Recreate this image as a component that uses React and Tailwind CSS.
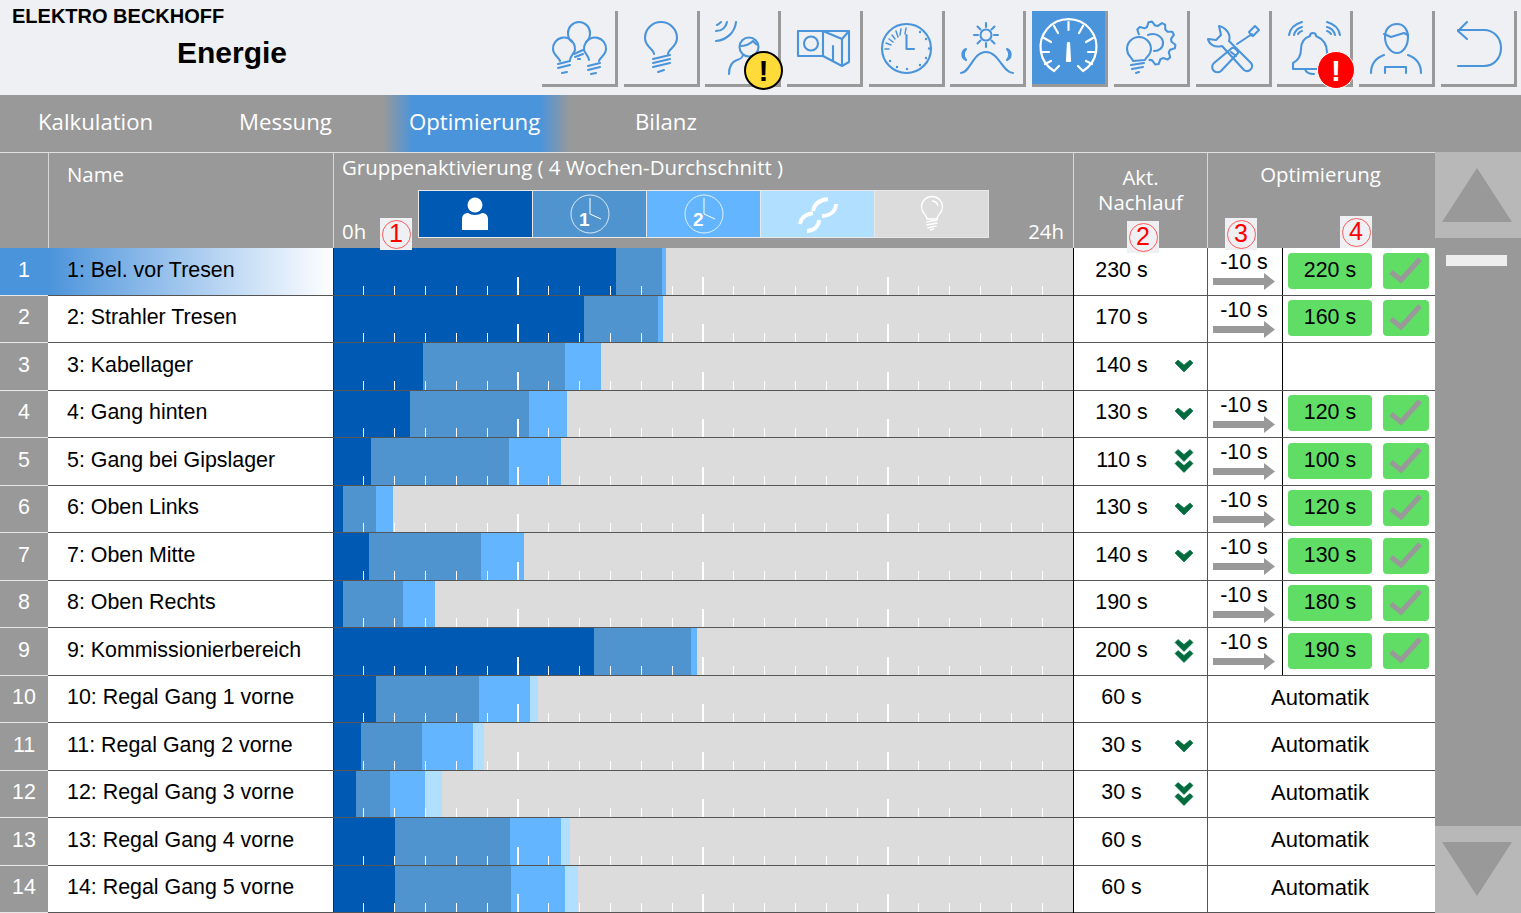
import React from 'react';

const rows = [
  { name: '1: Bel. vor Tresen', bars: [283, 46, 4, 0], time: '230 s', arrow: 0, opt: '220 s' },
  { name: '2: Strahler Tresen', bars: [251, 74, 5, 0], time: '170 s', arrow: 0, opt: '160 s' },
  { name: '3: Kabellager', bars: [90, 142, 36, 0], time: '140 s', arrow: 1, blank: true },
  { name: '4: Gang hinten', bars: [77, 119, 38, 0], time: '130 s', arrow: 1, opt: '120 s' },
  { name: '5: Gang bei Gipslager', bars: [38, 138, 52, 0], time: '110 s', arrow: 2, opt: '100 s' },
  { name: '6: Oben Links', bars: [10, 33, 17, 0], time: '130 s', arrow: 1, opt: '120 s' },
  { name: '7: Oben Mitte', bars: [36, 112, 43, 0], time: '140 s', arrow: 1, opt: '130 s' },
  { name: '8: Oben Rechts', bars: [10, 60, 32, 0], time: '190 s', arrow: 0, opt: '180 s' },
  { name: '9: Kommissionierbereich', bars: [261, 97, 6, 0], time: '200 s', arrow: 2, opt: '190 s' },
  { name: '10: Regal Gang 1 vorne', bars: [43, 103, 51, 8], time: '60 s', arrow: 0 },
  { name: '11: Regal Gang 2 vorne', bars: [28, 61, 51, 11], time: '30 s', arrow: 1 },
  { name: '12: Regal Gang 3 vorne', bars: [23, 34, 35, 17], time: '30 s', arrow: 2 },
  { name: '13: Regal Gang 4 vorne', bars: [62, 115, 51, 9], time: '60 s', arrow: 0 },
  { name: '14: Regal Gang 5 vorne', bars: [62, 116, 54, 13], time: '60 s', arrow: 0 },
];

const barColors = ['#0059b3', '#4f94cf', '#63b5ff', '#b0dfff'];
const ticks = Array.from({ length: 23 }, (_, i) => i + 1);

// Zahnrad-Kontur als offener Linienzug, von -150 bis 105 Grad
function gearPath(cx, cy, inner, outer) {
  const pts = [];
  const steps = 28;
  for (let i = 0; i <= steps; i++) {
    const a = ((-150 + (255 * i) / steps) * Math.PI) / 180;
    const r = i % 4 === 1 || i % 4 === 2 ? outer : inner;
    pts.push(`${(cx + r * Math.cos(a)).toFixed(1)} ${(cy + r * Math.sin(a)).toFixed(1)}`);
  }
  return 'M' + pts.join('L');
}

function Stroke({ color = '#4a94db', width = 2.1, children }) {
  return (
    <svg viewBox="0 0 76 76" className="w-[76px] h-[76px]" fill="none" stroke={color} strokeWidth={width} strokeLinecap="round" strokeLinejoin="round">
      {children}
    </svg>
  );
}

const icons = [
  // drei Lampen
  <Stroke key="a">
    <path d="M30 31c-3-2-4-5-4-9a11 11 0 0 1 22 0c0 4-1 7-4 9" />
    <path d="M18 50c-1-4-7-6-7-12a11 11 0 0 1 21-5c1 2 1 4 1 6-1 4-5 6-5 10" />
    <path d="M57 50c1-4 7-6 7-12a11 11 0 0 0-21-5c-1 2-1 4-1 6 1 4 5 6 5 10" />
    <path d="M32 43l9-4M33 46l8-3M36 48h2" />
    <path d="M16 53l12-3M16 57l12-3M20 62l5-1M46 55l12-3M46 59l12-3M49 63l5-1" />
  </Stroke>,
  // Lampe
  <Stroke key="b">
    <path d="M30 43c0-5-9-7-9-16a16 16 0 0 1 32 0c0 9-9 11-9 16" />
    <path d="M29 48l17-4M29 52l17-4M29 56l17-4M34 61l6-2" />
  </Stroke>,
  // Bewegungsmelder
  <Stroke key="c">
    <path d="M31 11c-1 10-9 18-20 19M22 11c-1 5-5 9-11 9M16 11c-1 1-2 2-4 3" />
    <circle cx="44" cy="36" r="9.500" />
    <path d="M35 35c5 0 10-2 13-5 2 2 3 4 5 4M38 44c-1 3-2 4-6 5-6 2-8 7-8 14" />
  </Stroke>,
  // Schalter
  <Stroke key="d">
    <path d="M11 20h25v25H11z" />
    <circle cx="24" cy="32.500" r="7" />
    <path d="M36 20h26v31l-7 4-19-10M36 20l19 8v27M62 20l-7 8M46 35v14" />
  </Stroke>,
  // Zeitschaltuhr
  <Stroke key="e">
    <circle cx="37.500" cy="37.500" r="24.500" />
    <path d="M37.500 24v14h7.500" />
    <path d="M37 17l-1 6M32 18l-1 6M27 20l2 6M23 24l3 4M20 28l4 3M17 32l5 2M16 38l4 0" strokeWidth="1.500" />
    <path d="M51 21v.1M57 28v.1M60 37.500v.1M57 47v.1M51 54v.1M38 58v.1M28 56v.1M21 50v.1" strokeWidth="2.400" />
  </Stroke>,
  // Tag und Nacht
  <Stroke key="f">
    <circle cx="36" cy="24" r="5.500" />
    <path d="M36 12v4M36 32v4M24 24h4M44 24h4M27.500 15.500l3 3M41.500 29.500l3 3M27.500 32.500l3-3M41.500 18.500l3-3" />
    <path d="M11 62c9 0 12-21 25-21s17 21 27 21" />
    <path d="M16 38a6 6 0 0 0 0 11 8 8 0 0 1 0-11zM57 38a6 6 0 0 1 0 11 8 8 0 0 0 0-11z" />
  </Stroke>,
  // Tacho, aktiv
  <Stroke key="g" color="#fff" width="2.200">
    <path d="M22 60a28 28 0 1 1 29 0l-5-5M22 60l5-5" />
    <path d="M36.500 11v8M22 15l4 7M51 15l-4 7M12 27l7 4M61 27l-7 4M9 41h8M64 41h-8M13 53l6-3M60 53l-6-3" />
    <path d="M35 50l1-18h1l1 18z" fill="#fff" />
  </Stroke>,
  // Einstellungen
  <Stroke key="h">
    <path d={gearPath(40, 32, 17.5, 21.5)} />
    <path d="M34 24c8-3 15 2 15 8 0 5-4 8-9 8" />
    <path d="M19 50c-1-4-6-5-6-12a12 12 0 0 1 24 0c0 6-5 8-6 11z" />
    <path d="M17 54l13-2M18 58l11-2M22 62l3-1" />
  </Stroke>,
  // Werkzeug
  <Stroke key="i">
    <path d="M26 35C18 37 13 33 12 28l8 1 5-5-2-9c8 2 12 9 10 15l22 22a5 5 0 0 1-7 7z" />
    <path d="M36 37L18 52a5 5 0 0 0 7 8L42 42c1-2-4-6-6-5zM41 33l15-10M55 24l-2-3 6-6 4 4-6 6z" />
    <path d="M35 41l5 4" />
  </Stroke>,
  // Alarm
  <Stroke key="j">
    <path d="M33 25a3 3 0 0 1 6 0c7 3 11 9 11 16 0 7 3 11 9 14v3H16v-6c6-3 8-7 8-14 0-6 3-11 9-13z" />
    <path d="M28 58c1 4 5 5 9 5" />
    <path d="M12 24c1-6 6-11 13-13M17 24c1-4 4-7 8-8M21 23c1-1 2-3 4-3M63 24c-1-6-6-11-13-13M58 24c-1-4-4-7-8-8M54 23c-1-1-2-3-4-3" />
  </Stroke>,
  // Benutzer
  <Stroke key="k">
    <path d="M26 26c0-8 5-13 12-13s11 6 11 13c0 9-5 16-11 16s-12-7-12-16z" />
    <path d="M25 23l7 3 13-4 4 2" />
    <path d="M12 62c0-10 5-15 13-18M62 62c0-10-5-15-13-18" />
    <path d="M26 62v-6h21v6" />
  </Stroke>,
  // Zurueck
  <Stroke key="l">
    <path d="M26 11l-9 9 9 8" />
    <path d="M17 19h26c10 0 17 8 17 18s-7 18-17 18H17" />
  </Stroke>,
];

function TopButton({ active, children }) {
  return (
    <div className={`w-[76px] h-[76px] shrink-0 border-r-[3px] border-b-[3px] border-[#999999] box-border overflow-visible ${active ? 'bg-[#4a94db]' : ''}`}>
      {children}
    </div>
  );
}

function Callout({ n, className }) {
  return (
    <div className={`absolute w-8 h-8 bg-[#eff0f3] flex items-center justify-center ${className}`}>
      <div className="w-[29px] h-[29px] rounded-full border border-[#ff5a5a] flex items-center justify-center text-[#ff0000] text-[25px] font-['Liberation_Sans',sans-serif]">
        {n}
      </div>
    </div>
  );
}

function Chevrons({ count }) {
  if (!count) return null;
  return (
    <svg viewBox="0 0 20 24" className="absolute left-[100px] top-1/2 -translate-y-1/2 w-5 h-6" fill="#006b3c" stroke="#006b3c" strokeWidth="0.600">
      {count === 1 && <path d="M1 9l3-3 6 5 6-5 3 3-9 9z" />}
      {count === 2 && <path d="M1 3.500l3-3 6 5 6-5 3 3-9 9zM1 14.500l3-3 6 5 6-5 3 3-9 9z" />}
    </svg>
  );
}

function ArrowGray() {
  return (
    <svg viewBox="0 0 62 17" className="w-[62px] h-[17px] shrink-0" fill="#999999">
      <path d="M0 5h51V0l11 8.500L51 17v-5H0z" />
    </svg>
  );
}

function ClockLegend({ digit }) {
  return (
    <svg viewBox="0 0 40 40" className="w-10 h-10" fill="none" stroke="#fff">
      <circle cx="20" cy="20" r="19" strokeWidth="0.800" />
      <path d="M20 4v16l11 5" strokeWidth="1" />
      <text x="9" y="32" fill="#fff" stroke="none" fontSize="19" fontWeight="700" fontFamily="Liberation Sans, sans-serif">{digit}</text>
    </svg>
  );
}

function Row({ row, index }) {
  const selected = index === 0;
  return (
    <div className="grid grid-cols-[48px_285px_741px_134px_227px] h-[47.5px] box-border">
      <div className={`flex items-center justify-center pb-[3px] text-white text-[21.4px] border-b border-[#e8e8e8] ${selected ? 'bg-[#4a94db]' : 'bg-[#999999]'}`}>
        {index + 1}
      </div>
      <div className={`flex items-center pl-[19px] pb-[3px] text-[21.4px] text-black border-b border-[#555555] whitespace-nowrap ${selected ? 'bg-linear-to-r from-[#4a94db] to-white' : 'bg-white'}`}>
        {row.name}
      </div>
      <div className="relative flex bg-[#dcdcdc] border-r border-black overflow-hidden">
        {row.bars.map((w, i) => (
          <div key={i} className="h-full shrink-0" style={{ width: w, backgroundColor: barColors[i] }} />
        ))}
        {ticks.map(t => (
          <div
            key={t}
            className={`absolute bottom-0 bg-white ${t % 6 === 0 ? 'w-[2px] h-[19px]' : 'w-px h-[10px]'}`}
            style={{ left: t * 30.83 - 0.5 }}
          />
        ))}
        <div className="absolute left-0 top-0 bottom-0 w-px bg-[#00336b]" />
        <div className="absolute left-0 right-0 bottom-0 h-px bg-[#555555]" />
      </div>
      <div className="relative bg-white border-r border-[#555555] border-b flex items-center pb-[3px]">
        <div className="w-[95px] text-center text-[21.4px] text-black">{row.time}</div>
        <Chevrons count={row.arrow} />
      </div>
      {row.opt || row.blank ? (
        <div className="flex bg-white border-b border-[#555555]">
          <div className="w-[75px] shrink-0 border-r border-black flex flex-col items-center pt-[3px] pr-[2px]">
            {row.opt && (
              <>
                <div className="text-[21.4px] leading-[22px] text-black">-10 s</div>
                <ArrowGray />
              </>
            )}
          </div>
          {row.opt && (
            <div className="flex items-center pl-[5px] gap-[11px] pb-px">
              <div className="w-[84px] h-9 rounded bg-[#60dd65] flex items-center justify-center pb-[2px] text-[21.4px] text-black">{row.opt}</div>
              <div className="w-[46px] h-9 rounded bg-[#60dd65] flex items-center justify-center">
                <svg viewBox="0 0 46 36" className="w-[46px] h-9" fill="none" stroke="#999999" strokeWidth="5">
                  <path d="M8 19l10 8L37 6" />
                </svg>
              </div>
            </div>
          )}
        </div>
      ) : (
        <div className="bg-white border-b border-[#555555] flex items-center justify-center pb-[3px] pr-[3px] text-[22px] text-black">Automatik</div>
      )}
    </div>
  );
}

export default function App() {
  return (
    <div className="relative w-[1521px] h-[913px] overflow-hidden bg-[#eff0f3] font-['Liberation_Sans',sans-serif]">
      {/* Kopfzeile */}
      <div className="h-[95px] flex">
        <div className="w-[542px] shrink-0 pl-3 pt-[5px]">
          <div className="text-[20px] leading-[22px] font-bold text-black">ELEKTRO BECKHOFF</div>
          <div className="pl-[165px] pt-[7px] text-[30px] leading-[38px] font-bold text-black">Energie</div>
        </div>
        <div className="flex pt-[11px] gap-[5.7px]">
          {icons.map((icon, i) => (
            <TopButton key={i} active={i === 6}>{icon}</TopButton>
          ))}
        </div>
      </div>

      {/* Reiter */}
      <div className="h-[57px] bg-[#999999] flex items-center pb-[3px] text-white text-[22.2px] font-['Open_Sans',sans-serif] relative">
        <div className="w-[239px] pl-[38px]">Kalkulation</div>
        <div className="w-[144px]">Messung</div>
        <div className="w-[187px] h-[57px] -mb-[3px] flex items-center pl-[26px] pb-[3px] bg-[linear-gradient(90deg,#999999,#4a94db_16%,#4a94db_84%,#999999)]">
          Optimierung
        </div>
        <div className="pl-[65px]">Bilanz</div>
      </div>

      <div className="flex">
        <div className="w-[1435px]">
          {/* Tabellenkopf */}
          <div className="grid grid-cols-[49px_285px_740px_134px_227px] h-[96px] bg-[#999999] border-t border-[#e0e0e0] text-white text-[20.4px] font-['Open_Sans',sans-serif]">
            <div className="border-r border-[#d8d8d8]" />
            <div className="border-r border-[#d8d8d8] pl-[18px] pt-[6px]">Name</div>
            <div className="relative border-r border-[#d8d8d8] pl-[8px]">
              <div className="whitespace-nowrap -mt-px">Gruppenaktivierung ( 4 Wochen-Durchschnitt )</div>
              <div className="absolute left-[84px] top-[37px] flex border border-[#e8e8e8]">
                <div className="w-[114px] h-[46px] bg-[#0059b3] border-r border-[#e8e8e8] flex items-center justify-center pr-[2px]">
                  <svg viewBox="0 0 30 36" className="w-[30px] h-9" fill="#fff">
                    <circle cx="15" cy="9" r="7.500" />
                    <path d="M2 34V23c0-4 3-6 6-6 2 1 4 2 7 2s5-1 7-2c3 0 6 2 6 6v11z" />
                  </svg>
                </div>
                <div className="w-[114px] h-[46px] bg-[#4f94cf] border-r border-[#e8e8e8] flex items-center justify-center">
                  <ClockLegend digit="1" />
                </div>
                <div className="w-[114px] h-[46px] bg-[#63b5ff] border-r border-[#e8e8e8] flex items-center justify-center">
                  <ClockLegend digit="2" />
                </div>
                <div className="w-[114px] h-[46px] bg-[#b0dfff] border-r border-[#e8e8e8] flex items-center justify-center">
                  <svg viewBox="0 0 40 40" className="w-10 h-10" fill="none" stroke="#fff" strokeWidth="3.800">
                    <path d="M30 5C22 6 16 10 15 17M38 10C38 17 32 22 24 22M2 30C3 24 8 20 15 19M21 26C21 32 16 37 9 37" />
                  </svg>
                </div>
                <div className="w-[113px] h-[46px] bg-[#dcdcdc] flex items-center justify-center">
                  <svg viewBox="0 0 40 40" className="w-10 h-10" fill="none" stroke="#fff" strokeWidth="1.300">
                    <path d="M15 25c0-4-5.500-6-5.500-12a10.500 10.500 0 0 1 21 0c0 6-5.500 8-5.500 12z" />
                    <path d="M14.500 28l11-2M14.500 31l11-2M15.500 34l9-2M18 36l4-1M20 7c2 0 5 1 6 5" />
                  </svg>
                </div>
              </div>
              <div className="absolute left-[8px] top-[63px]">0h</div>
              <div className="absolute right-[9px] top-[63px]">24h</div>
            </div>
            <div className="border-r border-[#d8d8d8] text-center pt-[12px] leading-[25px]">Akt.<br />Nachlauf</div>
            <div className="text-center pt-[6px] pr-[2px]">Optimierung</div>
          </div>
          {rows.map((row, i) => (
            <Row key={row.name} row={row} index={i} />
          ))}
        </div>

        {/* Scrollleiste */}
        <div className="w-[86px] h-[761px] bg-[#999999] flex flex-col justify-between">
          <div>
            <div className="h-[86px] bg-[#b8b8b8] flex items-center justify-center pr-[2px]">
              <svg viewBox="0 0 70 54" className="w-[70px] h-[54px]" fill="#999999"><path d="M35 0l35 54H0z" /></svg>
            </div>
            <div className="ml-[11px] mt-[17px] w-[61px] h-[11px] bg-[#eeeeee]" />
          </div>
          <div className="h-[87px] bg-[#b8b8b8] flex items-center justify-center pr-[2px] pb-[2px]">
            <svg viewBox="0 0 70 54" className="w-[70px] h-[54px]" fill="#999999"><path d="M0 0h70L35 54z" /></svg>
          </div>
        </div>
      </div>

      {/* Markierungen */}
      <Callout n="1" className="left-[380px] top-[218px]" />
      <Callout n="2" className="left-[1127px] top-[221px]" />
      <Callout n="3" className="left-[1225px] top-[218px]" />
      <Callout n="4" className="left-[1340px] top-[216px]" />

      {/* Warnungen */}
      <div className="absolute left-[744px] top-[51px] w-[39px] h-[39px] rounded-full bg-[#fedb38] border-2 border-black flex items-center justify-center text-black text-[30px] font-bold">!</div>
      <div className="absolute left-[1317px] top-[51px] w-[38px] h-[38px] rounded-full bg-[#ff0000] border border-white flex items-center justify-center text-white text-[30px] font-bold">!</div>
    </div>
  );
}
